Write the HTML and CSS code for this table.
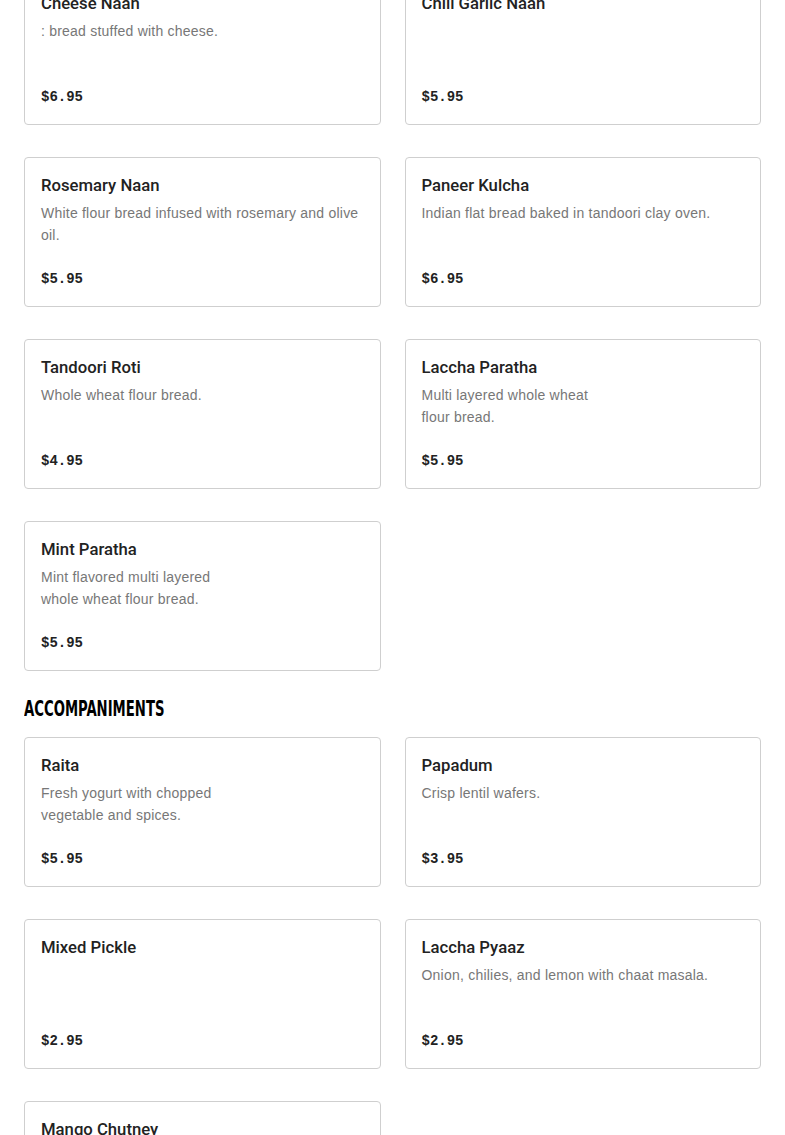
FILE: index.html
```html
<!DOCTYPE html>
<html lang="en">
<head>
<meta charset="utf-8">
<title>Menu</title>
<link rel="stylesheet" href="styles.css">
</head>
<body>
<main class="menu">
  <section class="section">
    <div class="grid">
      <article class="card"><h3 class="name">Cheese Naan</h3><p class="desc">: bread stuffed with cheese.</p><p class="price">$6.95</p></article>
      <article class="card"><h3 class="name">Chili Garlic Naan</h3><p class="desc"></p><p class="price">$5.95</p></article>
      <article class="card"><h3 class="name">Rosemary Naan</h3><p class="desc">White flour bread infused with rosemary and olive oil.</p><p class="price">$5.95</p></article>
      <article class="card"><h3 class="name">Paneer Kulcha</h3><p class="desc">Indian flat bread baked in tandoori clay oven.</p><p class="price">$6.95</p></article>
      <article class="card"><h3 class="name">Tandoori Roti</h3><p class="desc">Whole wheat flour bread.</p><p class="price">$4.95</p></article>
      <article class="card"><h3 class="name">Laccha Paratha</h3><p class="desc">Multi layered whole wheat<br>flour bread.</p><p class="price">$5.95</p></article>
      <article class="card"><h3 class="name">Mint Paratha</h3><p class="desc">Mint flavored multi layered<br>whole wheat flour bread.</p><p class="price">$5.95</p></article>
    </div>
  </section>
  <section class="section">
    <h2 class="section-title"><span class="section-title-text">Accompaniments</span></h2>
    <div class="grid">
      <article class="card"><h3 class="name">Raita</h3><p class="desc">Fresh yogurt with chopped<br>vegetable and spices.</p><p class="price">$5.95</p></article>
      <article class="card"><h3 class="name">Papadum</h3><p class="desc">Crisp lentil wafers.</p><p class="price">$3.95</p></article>
      <article class="card"><h3 class="name">Mixed Pickle</h3><p class="desc"></p><p class="price">$2.95</p></article>
      <article class="card"><h3 class="name">Laccha Pyaaz</h3><p class="desc">Onion, chilies, and lemon with chaat masala.</p><p class="price">$2.95</p></article>
      <article class="card"><h3 class="name">Mango Chutney</h3><p class="desc"></p><p class="price">$2.95</p></article>
    </div>
  </section>
</main>
</body>
</html>
```
FILE: styles.css
```css
html, body {
  margin: 0;
  padding: 0;
  background: #fff;
}
body {
  font-family: "Liberation Sans", Arial, sans-serif;
  color: #222;
}
.menu {
  padding: 0 24px;
  margin-top: -25px;
}
.section-title {
  margin: 0;
  padding: 26px 0 16px;
  font-family: "DejaVu Sans Condensed", "DejaVu Sans", sans-serif;
  font-weight: bold;
  font-size: 21px;
  line-height: 24px;
  letter-spacing: 0;
  text-transform: uppercase;
  color: #000;
}
.section-title-text {
  display: inline-block;
  transform: scaleX(0.7);
  transform-origin: left center;
}
.grid {
  display: grid;
  grid-template-columns: 1fr 1fr;
  column-gap: 24px;
  row-gap: 32px;
}
.card {
  box-sizing: border-box;
  height: 150px;
  border: 1px solid #cfcfcf;
  border-radius: 4px;
  padding: 16px 16px 16px;
  display: flex;
  flex-direction: column;
}
.name {
  margin: 0;
  font-family: Roboto, "Liberation Sans", sans-serif;
  font-size: 16.7px;
  line-height: 24px;
  font-weight: 500;
  color: #222;
}
.desc {
  margin: 4px 0 0;
  font-size: 14px;
  line-height: 22px;
  letter-spacing: 0.22px;
  color: #777;
}
.price {
  margin: auto 0 0;
  font-family: "Liberation Mono", "Courier New", monospace;
  font-weight: bold;
  font-size: 14px;
  line-height: 22px;
  color: #222;
}
```
